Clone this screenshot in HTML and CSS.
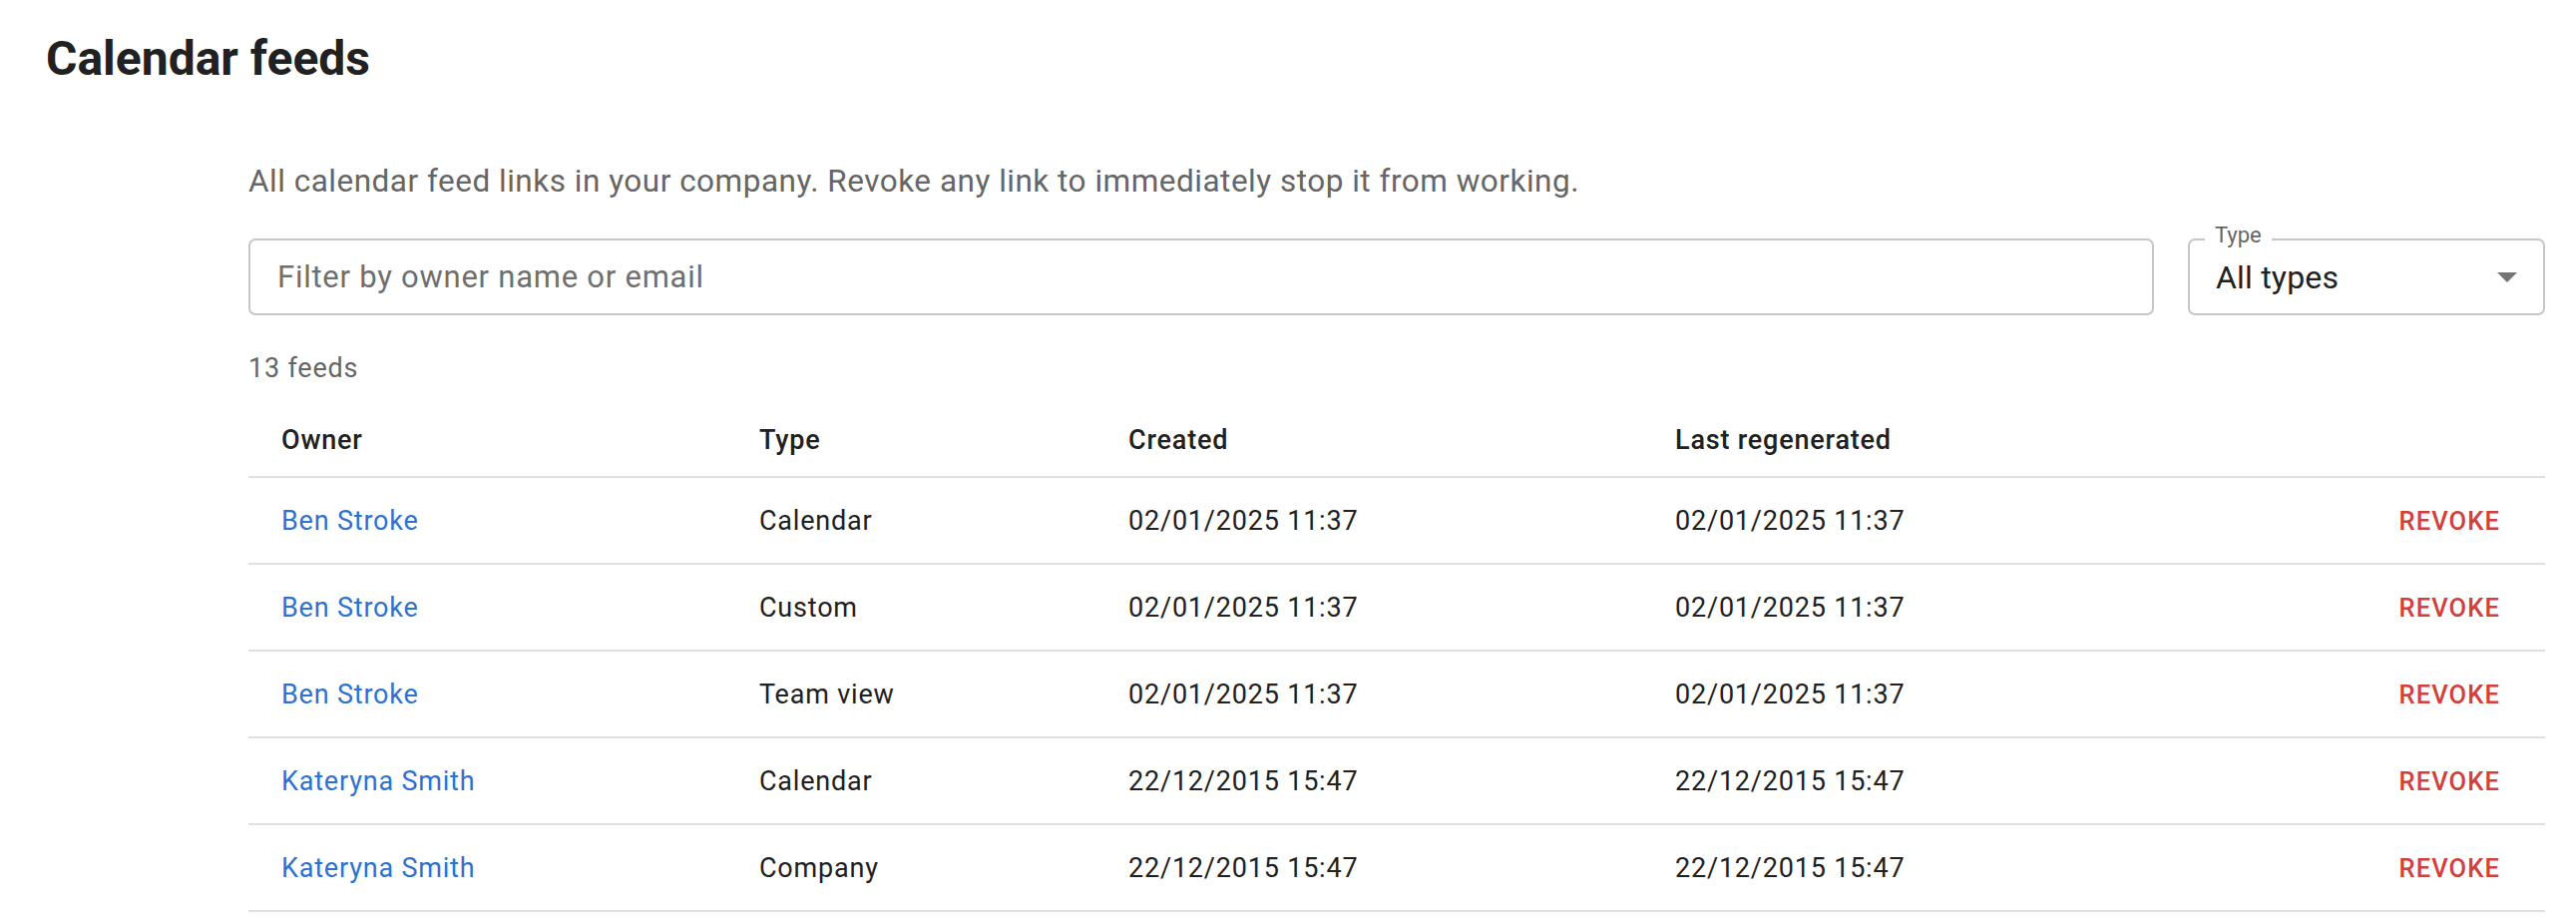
FILE: index.html
```html
<!DOCTYPE html>
<html lang="en">
<head>
<meta charset="utf-8">
<title>Calendar feeds</title>
<link rel="stylesheet" href="styles.css">
</head>
<body>
<main class="page">
  <h1 class="page-title">Calendar feeds</h1>

  <section class="feeds">
    <p class="intro">All calendar feed links in your company. Revoke any link to immediately stop it from working.</p>

    <div class="filters">
      <input class="search" type="text" placeholder="Filter by owner name or email">
      <div class="select">
        <span class="select-label">Type</span>
        <span class="select-value">All types</span>
        <svg class="select-arrow" viewBox="0 0 20 10" width="20" height="10" aria-hidden="true">
          <path d="M0 0h20L10 10z" fill="currentColor"/>
        </svg>
      </div>
    </div>

    <p class="count">13 feeds</p>

    <table class="feed-table">
      <colgroup>
        <col class="col-owner">
        <col class="col-type">
        <col class="col-created">
        <col class="col-regen">
        <col>
      </colgroup>
      <thead>
        <tr>
          <th>Owner</th>
          <th>Type</th>
          <th>Created</th>
          <th>Last regenerated</th>
          <th></th>
        </tr>
      </thead>
      <tbody>
        <tr>
          <td><a class="owner" href="#">Ben Stroke</a></td>
          <td>Calendar</td>
          <td>02/01/2025 11:37</td>
          <td>02/01/2025 11:37</td>
          <td class="action"><button class="revoke" type="button">Revoke</button></td>
        </tr>
        <tr>
          <td><a class="owner" href="#">Ben Stroke</a></td>
          <td>Custom</td>
          <td>02/01/2025 11:37</td>
          <td>02/01/2025 11:37</td>
          <td class="action"><button class="revoke" type="button">Revoke</button></td>
        </tr>
        <tr>
          <td><a class="owner" href="#">Ben Stroke</a></td>
          <td>Team view</td>
          <td>02/01/2025 11:37</td>
          <td>02/01/2025 11:37</td>
          <td class="action"><button class="revoke" type="button">Revoke</button></td>
        </tr>
        <tr>
          <td><a class="owner" href="#">Kateryna Smith</a></td>
          <td>Calendar</td>
          <td>22/12/2015 15:47</td>
          <td>22/12/2015 15:47</td>
          <td class="action"><button class="revoke" type="button">Revoke</button></td>
        </tr>
        <tr>
          <td><a class="owner" href="#">Kateryna Smith</a></td>
          <td>Company</td>
          <td>22/12/2015 15:47</td>
          <td>22/12/2015 15:47</td>
          <td class="action"><button class="revoke" type="button">Revoke</button></td>
        </tr>
      </tbody>
    </table>
  </section>
</main>
</body>
</html>
```

FILE: styles.css
```css
html, body {
  margin: 0;
  background: #fff;
}

body {
  font-family: Roboto, "Liberation Sans", Arial, sans-serif;
  color: #212121;
}

.page {
  padding: 30px 31px 0 46px;
}

.page-title {
  margin: 0;
  font-size: 48px;
  line-height: 58px;
  font-weight: 700;
  color: #212121;
}

.feeds {
  margin: 74px 0 0 203px;
}

.intro {
  margin: 0;
  font-size: 31.5px;
  line-height: 40px;
  letter-spacing: 0.5px;
  color: #666;
}

.filters {
  margin-top: 37px;
  display: flex;
  gap: 34px;
  height: 77px;
}

.search {
  flex: 1;
  box-sizing: border-box;
  height: 100%;
  margin: 0;
  padding: 0 27px;
  border: 2px solid #c6c6c6;
  border-radius: 7px;
  font-family: inherit;
  font-size: 31px;
  letter-spacing: 0.75px;
  color: #212121;
  outline: none;
}

.search::placeholder {
  color: #6f6f6f;
  opacity: 1;
}

.select {
  position: relative;
  width: 358px;
  box-sizing: border-box;
  height: 100%;
  display: flex;
  align-items: center;
  padding: 0 26px 0 26px;
  border: 2px solid #c6c6c6;
  border-radius: 7px;
}

/* floating label sitting in a gap of the outline */
.select-label {
  position: absolute;
  top: -18px;
  left: 15px;
  padding: 0 10px;
  background: #fff;
  font-size: 22px;
  line-height: 26px;
  color: #666;
}

.select-value {
  flex: 1;
  font-size: 32px;
  line-height: 40px;
  letter-spacing: 0.2px;
  color: #212121;
}

.select-arrow {
  color: #757575;
  width: 20px;
  height: 10px;
}

.count {
  margin: 37px 0 0;
  font-size: 27px;
  line-height: 32px;
  letter-spacing: 0.8px;
  color: #666;
}

.feed-table {
  margin-top: 19px;
  width: 100%;
  border-collapse: collapse;
  table-layout: fixed;
  font-size: 27px;
  letter-spacing: 0.8px;
}

.col-owner { width: 479px; }
.col-type { width: 370px; }
.col-created { width: 548px; }
.col-regen { width: 500px; }

.feed-table th,
.feed-table td {
  padding: 0 0 0 33px;
  text-align: left;
  vertical-align: middle;
  border-bottom: 2px solid #e0e0e0;
  white-space: nowrap;
}

.feed-table th {
  height: 73px;
  font-weight: 500;
  color: #212121;
}

.feed-table td {
  height: 85px;
  color: #212121;
}

.owner {
  color: #2f71cf;
  text-decoration: none;
}

.feed-table td.action {
  text-align: right;
  padding-right: 37px;
}

.revoke {
  margin: 0;
  padding: 6px 8px;
  border: 0;
  background: transparent;
  font-family: inherit;
  font-size: 25.5px;
  font-weight: 500;
  letter-spacing: 1.1px;
  text-transform: uppercase;
  color: #d1403a;
  cursor: pointer;
}
```
